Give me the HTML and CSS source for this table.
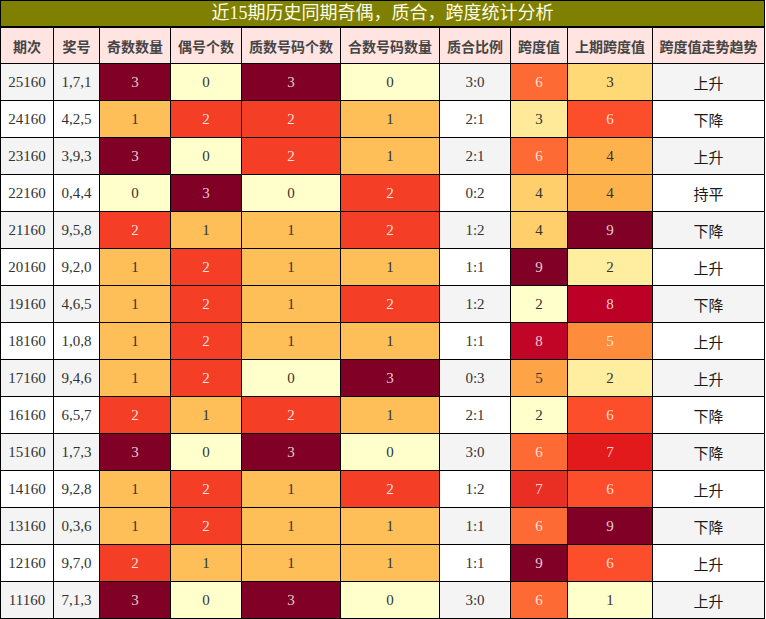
FILE: index.html
```html
<!DOCTYPE html>
<html lang="zh">
<head>
<meta charset="utf-8">
<link rel="stylesheet" href="styles.css">
</head>
<body>
<table class="stats">
<colgroup>
<col class="w53"><col class="w46"><col class="w71"><col class="w71"><col class="w99"><col class="w99"><col class="w71"><col class="w57"><col class="w85"><col class="w112">
</colgroup>
<thead>
<tr class="title-row"><th colspan="10">近15期历史同期奇偶，质合，跨度统计分析</th></tr>
<tr class="head-row"><th>期次</th><th>奖号</th><th>奇数数量</th><th>偶号个数</th><th>质数号码个数</th><th>合数号码数量</th><th>质合比例</th><th>跨度值</th><th>上期跨度值</th><th>跨度值走势趋势</th></tr>
</thead>
<tbody>
<tr class="alt"><td>25160</td><td>1,7,1</td><td class="c3">3</td><td class="c0">0</td><td class="c3">3</td><td class="c0">0</td><td>3:0</td><td class="s6">6</td><td class="p3">3</td><td class="trend">上升</td></tr>
<tr><td>24160</td><td>4,2,5</td><td class="c1">1</td><td class="c2">2</td><td class="c2">2</td><td class="c1">1</td><td>2:1</td><td class="s3">3</td><td class="p6">6</td><td class="trend">下降</td></tr>
<tr class="alt"><td>23160</td><td>3,9,3</td><td class="c3">3</td><td class="c0">0</td><td class="c2">2</td><td class="c1">1</td><td>2:1</td><td class="s6">6</td><td class="p4">4</td><td class="trend">上升</td></tr>
<tr><td>22160</td><td>0,4,4</td><td class="c0">0</td><td class="c3">3</td><td class="c0">0</td><td class="c2">2</td><td>0:2</td><td class="s4">4</td><td class="p4">4</td><td class="trend">持平</td></tr>
<tr class="alt"><td>21160</td><td>9,5,8</td><td class="c2">2</td><td class="c1">1</td><td class="c1">1</td><td class="c2">2</td><td>1:2</td><td class="s4">4</td><td class="p9">9</td><td class="trend">下降</td></tr>
<tr><td>20160</td><td>9,2,0</td><td class="c1">1</td><td class="c2">2</td><td class="c1">1</td><td class="c1">1</td><td>1:1</td><td class="s9">9</td><td class="p2">2</td><td class="trend">上升</td></tr>
<tr class="alt"><td>19160</td><td>4,6,5</td><td class="c1">1</td><td class="c2">2</td><td class="c1">1</td><td class="c2">2</td><td>1:2</td><td class="s2">2</td><td class="p8">8</td><td class="trend">下降</td></tr>
<tr><td>18160</td><td>1,0,8</td><td class="c1">1</td><td class="c2">2</td><td class="c1">1</td><td class="c1">1</td><td>1:1</td><td class="s8">8</td><td class="p5">5</td><td class="trend">上升</td></tr>
<tr class="alt"><td>17160</td><td>9,4,6</td><td class="c1">1</td><td class="c2">2</td><td class="c0">0</td><td class="c3">3</td><td>0:3</td><td class="s5">5</td><td class="p2">2</td><td class="trend">上升</td></tr>
<tr><td>16160</td><td>6,5,7</td><td class="c2">2</td><td class="c1">1</td><td class="c2">2</td><td class="c1">1</td><td>2:1</td><td class="s2">2</td><td class="p6">6</td><td class="trend">下降</td></tr>
<tr class="alt"><td>15160</td><td>1,7,3</td><td class="c3">3</td><td class="c0">0</td><td class="c3">3</td><td class="c0">0</td><td>3:0</td><td class="s6">6</td><td class="p7">7</td><td class="trend">下降</td></tr>
<tr><td>14160</td><td>9,2,8</td><td class="c1">1</td><td class="c2">2</td><td class="c1">1</td><td class="c2">2</td><td>1:2</td><td class="s7">7</td><td class="p6">6</td><td class="trend">上升</td></tr>
<tr class="alt"><td>13160</td><td>0,3,6</td><td class="c1">1</td><td class="c2">2</td><td class="c1">1</td><td class="c1">1</td><td>1:1</td><td class="s6">6</td><td class="p9">9</td><td class="trend">下降</td></tr>
<tr><td>12160</td><td>9,7,0</td><td class="c2">2</td><td class="c1">1</td><td class="c1">1</td><td class="c1">1</td><td>1:1</td><td class="s9">9</td><td class="p6">6</td><td class="trend">上升</td></tr>
<tr class="alt"><td>11160</td><td>7,1,3</td><td class="c3">3</td><td class="c0">0</td><td class="c3">3</td><td class="c0">0</td><td>3:0</td><td class="s6">6</td><td class="p1">1</td><td class="trend">上升</td></tr>
</tbody>
</table>
</body>
</html>
```
FILE: styles.css
```css
html, body {
  margin: 0;
  padding: 0;
  background: #fff;
}
.stats {
  border-collapse: collapse;
  table-layout: fixed;
  width: 765px;
  font-family: "Liberation Serif", "Noto Sans CJK SC", serif;
  color: #333;
}
.w53 { width: 53px; }
.w46 { width: 46px; }
.w71 { width: 71px; }
.w57 { width: 57px; }
.w85 { width: 85px; }
.w99 { width: 99px; }
.w112 { width: 112px; }

.stats th, .stats td {
  border: 1px solid #000;
  padding: 0;
  text-align: center;
  white-space: nowrap;
  overflow: hidden;
}
.title-row th {
  background: #808000;
  color: #fdfce6;
  font-weight: normal;
  font-size: 18px;
  height: 25px;
  line-height: 25px;
  border-bottom-width: 2px;
}
.head-row th {
  background: #ffe4e1;
  color: #454545;
  font-family: "Noto Sans CJK SC", sans-serif;
  font-weight: bold;
  font-size: 14px;
  height: 35px;
}
.stats td {
  height: 36px;
  font-size: 15px;
  background: #fff;
}
.stats tr.alt td { background: #f4f4f4; }
.stats td.trend {
  font-family: "Noto Sans CJK SC", sans-serif;
  color: #1a1a1a;
  font-size: 15px;
}

.stats tr td.c0 { background: #ffffcc; }
.stats tr td.c1 { background: #febe58; }
.stats tr td.c2 { background: #f43f26; color: rgba(255,255,255,0.85); }
.stats tr td.c3 { background: #800026; color: rgba(255,255,255,0.8); }

.stats tr td.s2 { background: #ffffcc; }
.stats tr td.s3 { background: #ffea9a; }
.stats tr td.s4 { background: #fecf6a; }
.stats tr td.s5 { background: #fea446; }
.stats tr td.s6 { background: #fd6a33; color: rgba(255,255,255,0.8); }
.stats tr td.s7 { background: #e92e24; color: rgba(255,255,255,0.8); }
.stats tr td.s8 { background: #c10526; color: rgba(255,255,255,0.8); }
.stats tr td.s9 { background: #800026; color: rgba(255,255,255,0.8); }

.stats tr td.p1 { background: #ffffcc; }
.stats tr td.p2 { background: #ffeda0; }
.stats tr td.p3 { background: #fed976; }
.stats tr td.p4 { background: #feb24c; }
.stats tr td.p5 { background: #fd8d3c; color: rgba(255,255,255,0.8); }
.stats tr td.p6 { background: #fc4e2a; color: rgba(255,255,255,0.8); }
.stats tr td.p7 { background: #e31a1c; color: rgba(255,255,255,0.8); }
.stats tr td.p8 { background: #bd0026; color: rgba(255,255,255,0.8); }
.stats tr td.p9 { background: #800026; color: rgba(255,255,255,0.8); }
```
